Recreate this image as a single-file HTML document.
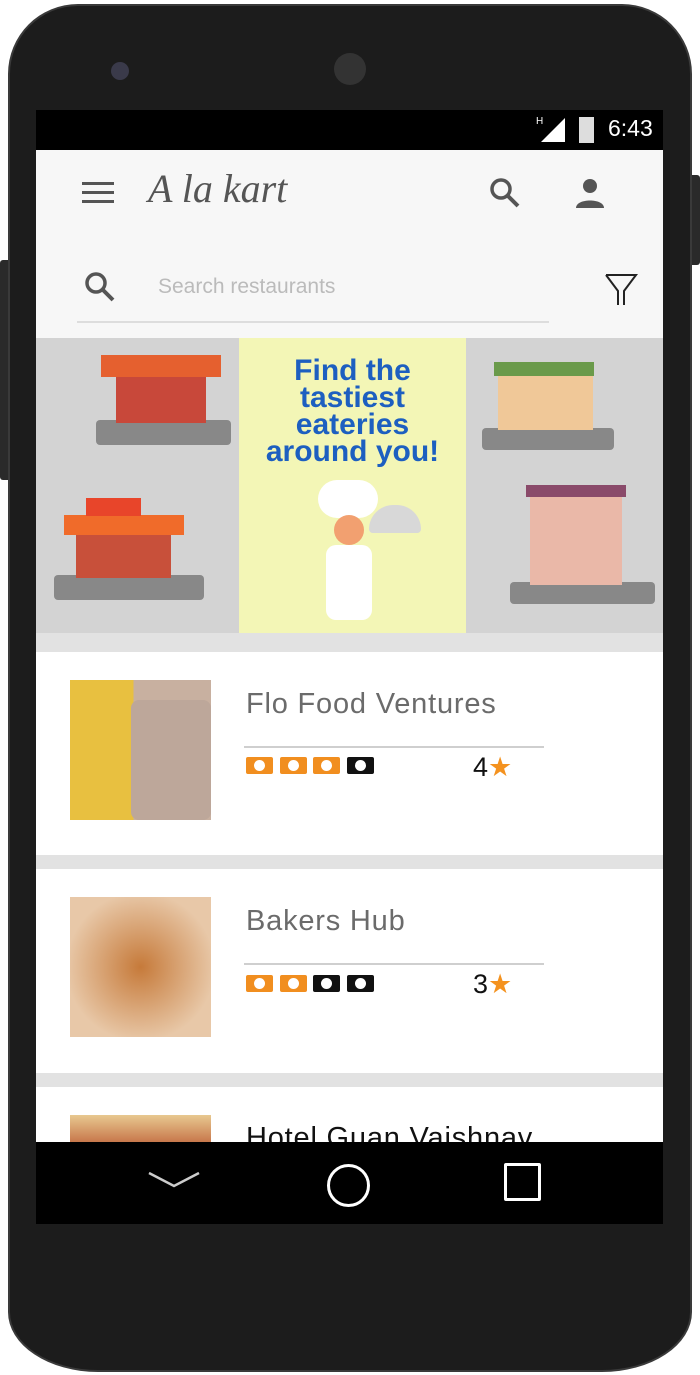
<!DOCTYPE html>
<html><head><meta charset="utf-8"><style>
*{margin:0;padding:0;box-sizing:border-box}
body{width:700px;height:1375px;background:#fff;position:relative;overflow:hidden;font-family:"Liberation Sans",sans-serif}
.abs{position:absolute}
.phone{left:8px;top:4px;width:684px;height:1368px;background:#1c1c1c;border-radius:70px 70px 90px 90px/70px 70px 60px 60px;border:2px solid #3a3a3a}
.screen{left:36px;top:110px;width:627px;height:1114px;background:#e2e2e2;overflow:hidden}
.card{position:absolute;left:0;width:627px;background:#fff}
.name{position:absolute;left:210px;font-size:29px;color:#6b6b6b;letter-spacing:.8px}
.line{position:absolute;left:208px;width:300px;height:2px;background:#cfcfcf}
.bill{position:absolute;width:27px;height:17px;border-radius:2px}
.bill::after{content:"";position:absolute;left:8px;top:3px;width:11px;height:11px;border-radius:50%;background:#fff}
.rate{position:absolute;left:437px;font-size:27px;color:#111}
</style></head><body>
<div class="abs phone"></div>
<div class="abs" style="left:0;top:260px;width:8px;height:220px;background:#2a2a2a;border-radius:3px 0 0 3px"></div>
<div class="abs" style="left:692px;top:175px;width:8px;height:90px;background:#2a2a2a;border-radius:0 3px 3px 0"></div>
<div class="abs" style="left:111px;top:62px;width:18px;height:18px;border-radius:50%;background:#3a3a4a"></div>
<div class="abs" style="left:334px;top:53px;width:32px;height:32px;border-radius:50%;background:#333"></div>
<div class="abs screen">
 <div class="abs" style="left:0;top:0;width:627px;height:40px;background:#000"></div>
 <div class="abs" style="left:500px;top:6px;font-size:10px;color:#fff">H</div>
 <svg class="abs" style="left:505px;top:8px" width="24" height="24"><path d="M24 0V24H0Z" fill="#fff"/></svg>
 <div class="abs" style="left:543px;top:7px;width:15px;height:26px;background:#ddd"></div>
 <div class="abs" style="left:572px;top:5px;font-size:23px;color:#fff">6:43</div>
 <div class="abs" style="left:0;top:40px;width:627px;height:188px;background:#f7f7f7"></div>
 <div class="abs" style="left:46px;top:72px;width:32px;height:3px;background:#555;box-shadow:0 9px #555,0 18px #555"></div>
 <div class="abs" style="left:112px;top:55px;font-family:'Liberation Serif',serif;font-style:italic;font-size:40px;color:#555">A la kart</div>
 <svg class="abs" style="left:452px;top:66px" width="34" height="34"><circle cx="13" cy="13" r="9" stroke="#555" stroke-width="3.5" fill="none"/><path d="M19 19l11 11" stroke="#555" stroke-width="4"/></svg>
 <svg class="abs" style="left:538px;top:66px" width="32" height="32"><circle cx="16" cy="10" r="7" fill="#555"/><path d="M2 32c0-10 28-10 28 0z" fill="#555"/></svg>
 <svg class="abs" style="left:47px;top:160px" width="34" height="34"><circle cx="13" cy="13" r="9" stroke="#555" stroke-width="3.5" fill="none"/><path d="M19 19l11 11" stroke="#555" stroke-width="4"/></svg>
 <div class="abs" style="left:122px;top:165px;font-size:21px;color:#bbb">Search restaurants</div>
 <svg class="abs" style="left:568px;top:163px" width="34" height="34"><path d="M2 2H32L20 18V32M14 32V18L2 2" stroke="#222" stroke-width="2" fill="none"/></svg>
 <div class="abs" style="left:41px;top:211px;width:472px;height:2px;background:#ddd"></div>
 <div class="abs" style="left:0;top:228px;width:627px;height:295px;background:#d3d3d3"></div>
 <div class="abs" style="left:203px;top:228px;width:227px;height:295px;background:#f3f6b6"></div>
 <div class="abs" style="left:203px;top:247px;width:227px;text-align:center;font-weight:bold;font-size:30px;line-height:27px;color:#1d5fc0">Find the<br>tastiest<br>eateries<br>around you!</div>
 <div class="abs" style="left:282px;top:370px;width:60px;height:38px;background:#fff;border-radius:30px"></div>
 <div class="abs" style="left:298px;top:405px;width:30px;height:30px;background:#f2a070;border-radius:50%"></div>
 <div class="abs" style="left:290px;top:435px;width:46px;height:75px;background:#fff;border-radius:10px"></div>
 <div class="abs" style="left:333px;top:395px;width:52px;height:28px;background:#d8d8d8;border-radius:26px 26px 4px 4px"></div>
 <div class="abs" style="left:60px;top:310px;width:135px;height:25px;background:#888;border-radius:4px"></div>
 <div class="abs" style="left:80px;top:265px;width:90px;height:48px;background:#c8483a"></div>
 <div class="abs" style="left:65px;top:245px;width:120px;height:22px;background:#e5602f"></div>
 <div class="abs" style="left:18px;top:465px;width:150px;height:25px;background:#888;border-radius:4px"></div>
 <div class="abs" style="left:40px;top:420px;width:95px;height:48px;background:#c8503a"></div>
 <div class="abs" style="left:28px;top:405px;width:120px;height:20px;background:#f06b2a"></div>
 <div class="abs" style="left:50px;top:388px;width:55px;height:18px;background:#e8452a"></div>
 <div class="abs" style="left:446px;top:318px;width:132px;height:22px;background:#888;border-radius:4px"></div>
 <div class="abs" style="left:462px;top:265px;width:95px;height:55px;background:#f0c898"></div>
 <div class="abs" style="left:458px;top:252px;width:100px;height:14px;background:#6a9a4a"></div>
 <div class="abs" style="left:474px;top:472px;width:145px;height:22px;background:#888;border-radius:4px"></div>
 <div class="abs" style="left:494px;top:385px;width:92px;height:90px;background:#eab8a8"></div>
 <div class="abs" style="left:490px;top:375px;width:100px;height:12px;background:#8a4a6a"></div>
 <div class="card" style="top:542px;height:203px"></div>
 <div class="abs" style="left:34px;top:570px;width:141px;height:140px;background:linear-gradient(90deg,#e8c040 0 45%,#c8b0a0 45%)"></div>
 <div class="abs" style="left:95px;top:590px;width:80px;height:120px;background:#bda79a;border-radius:8px"></div>
 <div class="name" style="top:578px">Flo Food Ventures</div>
 <div class="line" style="top:636px"></div>
 <div class="bill" style="left:210px;top:647px;background:#f18e1f"></div>
 <div class="bill" style="left:244px;top:647px;background:#f18e1f"></div>
 <div class="bill" style="left:277px;top:647px;background:#f18e1f"></div>
 <div class="bill" style="left:311px;top:647px;background:#111"></div>
 <div class="rate" style="top:642px">4<span style="color:#f4921f">★</span></div>
 <div class="card" style="top:759px;height:204px"></div>
 <div class="abs" style="left:34px;top:787px;width:141px;height:140px;background:radial-gradient(circle at 50% 50%,#c67a3a,#e8c8a8 75%)"></div>
 <div class="name" style="top:795px">Bakers Hub</div>
 <div class="line" style="top:853px"></div>
 <div class="bill" style="left:210px;top:865px;background:#f18e1f"></div>
 <div class="bill" style="left:244px;top:865px;background:#f18e1f"></div>
 <div class="bill" style="left:277px;top:865px;background:#111"></div>
 <div class="bill" style="left:311px;top:865px;background:#111"></div>
 <div class="rate" style="top:859px">3<span style="color:#f4921f">★</span></div>
 <div class="card" style="top:977px;height:60px"></div>
 <div class="abs" style="left:34px;top:1005px;width:141px;height:40px;background:linear-gradient(#e8c890,#b8502a)"></div>
 <div class="name" style="top:1012px;color:#111">Hotel Guan Vaishnav</div>
 <div class="abs" style="left:0;top:1032px;width:627px;height:82px;background:#000"></div>
 <svg class="abs" style="left:110px;top:1060px" width="60" height="24"><path d="M3 3L28 16L53 3" stroke="#ccc" stroke-width="2.5" fill="none"/></svg>
 <div class="abs" style="left:291px;top:1054px;width:43px;height:43px;border:3px solid #fff;border-radius:50%"></div>
 <div class="abs" style="left:468px;top:1053px;width:37px;height:38px;border:3px solid #fff;border-radius:2px"></div>
</div>
</body></html>
